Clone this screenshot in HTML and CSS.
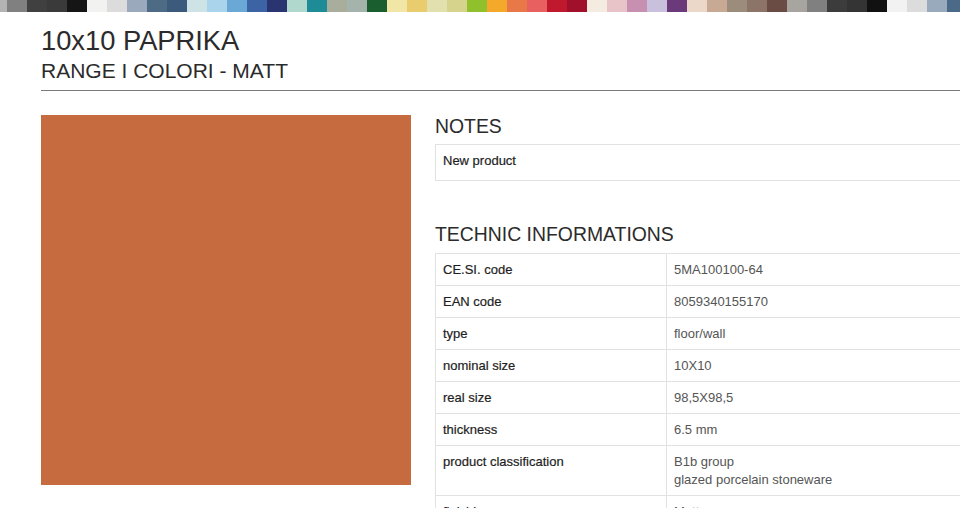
FILE: index.html
```html
<!DOCTYPE html>
<html lang="en">
<head>
<meta charset="utf-8">
<title>10x10 PAPRIKA - Range I Colori - Matt</title>
<link rel="stylesheet" href="styles.css">
</head>
<body>
<div class="color-strip">
  <span class="chip" style="background:#b4b4b4"></span>
  <span class="chip" style="background:#808080"></span>
  <span class="chip" style="background:#404040"></span>
  <span class="chip" style="background:#3a3a3a"></span>
  <span class="chip" style="background:#151515"></span>
  <span class="chip" style="background:#f2f2f0"></span>
  <span class="chip" style="background:#dcdcdc"></span>
  <span class="chip" style="background:#9aa9bb"></span>
  <span class="chip" style="background:#4e6b86"></span>
  <span class="chip" style="background:#3c5a7c"></span>
  <span class="chip" style="background:#cde3e6"></span>
  <span class="chip" style="background:#a9d4ec"></span>
  <span class="chip" style="background:#6aa8d6"></span>
  <span class="chip" style="background:#3c64a4"></span>
  <span class="chip" style="background:#2a3470"></span>
  <span class="chip" style="background:#b0d8cc"></span>
  <span class="chip" style="background:#1e8c96"></span>
  <span class="chip" style="background:#a9ae9c"></span>
  <span class="chip" style="background:#a4b4ac"></span>
  <span class="chip" style="background:#1a5e30"></span>
  <span class="chip" style="background:#f2e6a6"></span>
  <span class="chip" style="background:#e8cc6e"></span>
  <span class="chip" style="background:#e2e0ae"></span>
  <span class="chip" style="background:#d6d48c"></span>
  <span class="chip" style="background:#90c02c"></span>
  <span class="chip" style="background:#f5a92a"></span>
  <span class="chip" style="background:#e87848"></span>
  <span class="chip" style="background:#e86060"></span>
  <span class="chip" style="background:#c0182c"></span>
  <span class="chip" style="background:#a0102a"></span>
  <span class="chip" style="background:#f4ece0"></span>
  <span class="chip" style="background:#e8c4c8"></span>
  <span class="chip" style="background:#c890b0"></span>
  <span class="chip" style="background:#c8c0dc"></span>
  <span class="chip" style="background:#6a3a7a"></span>
  <span class="chip" style="background:#ecd8c8"></span>
  <span class="chip" style="background:#c8aa94"></span>
  <span class="chip" style="background:#9c8c7c"></span>
  <span class="chip" style="background:#8c7468"></span>
  <span class="chip" style="background:#6a4c44"></span>
  <span class="chip" style="background:#a8a4a0"></span>
  <span class="chip" style="background:#808080"></span>
  <span class="chip" style="background:#3c3c3c"></span>
  <span class="chip" style="background:#343434"></span>
  <span class="chip" style="background:#111111"></span>
  <span class="chip" style="background:#f2f2f2"></span>
  <span class="chip" style="background:#dcdcdc"></span>
  <span class="chip" style="background:#98aabb"></span>
  <span class="chip" style="background:#4a6a88"></span>
</div>

<main class="page">
  <header class="product-header">
    <h1 class="product-title">10x10 PAPRIKA</h1>
    <h2 class="product-range">RANGE I COLORI - MATT</h2>
  </header>

  <section class="product-body">
    <div class="product-swatch" role="img" aria-label="Paprika tile"></div>

    <div class="product-info">
      <h3 class="info-title">NOTES</h3>
      <table class="info-table notes-table">
        <tr><td class="label">New product</td></tr>
      </table>

      <h3 class="info-title tech-title">TECHNIC INFORMATIONS</h3>
      <table class="info-table tech-table">
        <tr><td class="label">CE.SI. code</td><td class="value">5MA100100-64</td></tr>
        <tr><td class="label">EAN code</td><td class="value">8059340155170</td></tr>
        <tr><td class="label">type</td><td class="value">floor/wall</td></tr>
        <tr><td class="label">nominal size</td><td class="value">10X10</td></tr>
        <tr><td class="label">real size</td><td class="value">98,5X98,5</td></tr>
        <tr><td class="label">thickness</td><td class="value">6.5 mm</td></tr>
        <tr><td class="label">product classification</td><td class="value">B1b group<br>glazed porcelain stoneware</td></tr>
        <tr><td class="label">finishing</td><td class="value">Matt</td></tr>
      </table>
    </div>
  </section>
</main>
</body>
</html>
```

FILE: styles.css
```css
html, body {
  margin: 0;
  padding: 0;
  overflow: hidden;
  background: #fff;
}

body {
  font-family: "Liberation Sans", Arial, Helvetica, sans-serif;
  color: #333;
}

/* colour range strip across the top */
.color-strip {
  display: flex;
  height: 12px;
  overflow: hidden;
}

.chip {
  flex: 0 0 20px;
  height: 12px;
}

.chip:first-child {
  margin-left: -13px;
}

.page {
  padding-left: 41px;
}

/* title block with the rule under it */
.product-header {
  padding-top: 13px;
  padding-bottom: 6px;
  border-bottom: 1px solid #7a7a7a;
}

.product-title {
  margin: 0;
  font-size: 27.3px;
  line-height: 32px;
  font-weight: normal;
  color: #2b2b2b;
}

.product-range {
  margin: 1px 0 0;
  font-size: 21px;
  line-height: 26px;
  font-weight: normal;
  color: #2b2b2b;
}

.product-body {
  display: flex;
  align-items: flex-start;
  gap: 24px;
  margin-top: 24px;
}

.product-swatch {
  flex: 0 0 370px;
  height: 370px;
  background: #c56b3f;
}

.product-info {
  flex: 0 0 600px;
}

.info-title {
  margin: 0;
  font-size: 19.4px;
  line-height: 22px;
  font-weight: normal;
  color: #2b2b2b;
}

.info-table {
  width: 100%;
  border-collapse: collapse;
  font-size: 13px;
  line-height: 18px;
}

.info-table td {
  border: 1px solid #e2e2e2;
  padding: 7px 7px 6px;
  vertical-align: top;
  text-align: left;
}

.notes-table {
  margin-top: 7px;
}

.notes-table td {
  padding: 7px 7px 10px;
}

.tech-title {
  margin-top: 42px;
}

.tech-table {
  margin-top: 8px;
}

.label {
  color: #1e1e1e;
  -webkit-text-stroke: 0.2px #1e1e1e;
}

.tech-table .label {
  width: 216px;
}

.value {
  color: #555;
}
```
